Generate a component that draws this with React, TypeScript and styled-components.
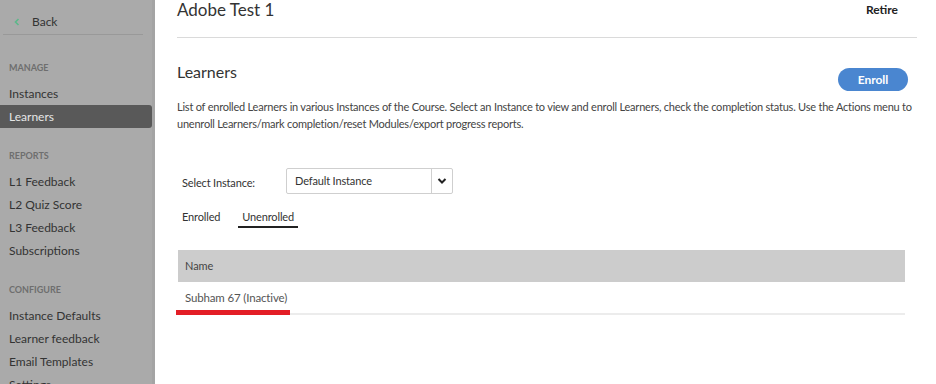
import styled, { createGlobalStyle } from "styled-components";

const GlobalStyle = createGlobalStyle`
  html, body {
    margin: 0;
    padding: 0;
    height: 384px;
    overflow: hidden;
    background: #fff;
  }
  body {
    font-family: Lato, "Open Sans", "Liberation Sans", sans-serif;
  }
  * { box-sizing: border-box; }
`;

const sections = [
  { title: "MANAGE", items: ["Instances", "Learners"] },
  {
    title: "REPORTS",
    items: ["L1 Feedback", "L2 Quiz Score", "L3 Feedback", "Subscriptions"],
  },
  {
    title: "CONFIGURE",
    items: ["Instance Defaults", "Learner feedback", "Email Templates", "Settings"],
  },
];

const App = () => {
  return (
    <Page>
      <GlobalStyle />
      <Sidebar>
        <BackRow>
          <svg width="10" height="10" viewBox="0 0 10 10">
            <path d="M6.5 2 L3.5 5 L6.5 8" stroke="#5cb88a" strokeWidth="1.6" fill="none" />
          </svg>
          <span>Back</span>
        </BackRow>
        {sections.map((s) => (
          <Section key={s.title}>
            <SectionTitle>{s.title}</SectionTitle>
            {s.items.map((item) => (
              <NavItem key={item} $active={item === "Learners"}>
                {item}
              </NavItem>
            ))}
          </Section>
        ))}
      </Sidebar>
      <Main>
        <Header>
          <CourseTitle>Adobe Test 1</CourseTitle>
          <RetireBtn>Retire</RetireBtn>
        </Header>
        <HeadingRow>
          <Heading>Learners</Heading>
          <EnrollBtn>Enroll</EnrollBtn>
        </HeadingRow>
        <Description>
          List of enrolled Learners in various Instances of the Course. Select an Instance to view and
          enroll Learners, check the completion status. Use the Actions menu to unenroll Learners/mark
          completion/reset Modules/export progress reports.
        </Description>
        <SelectRow>
          <SelectLabel>Select Instance:</SelectLabel>
          <SelectBox>
            <SelectValue>Default Instance</SelectValue>
            <SelectArrow>
              <svg width="10" height="8" viewBox="0 0 10 8">
                <path d="M1.5 2 L5 5.5 L8.5 2" stroke="#222" strokeWidth="2" fill="none" />
              </svg>
            </SelectArrow>
          </SelectBox>
        </SelectRow>
        <Tabs>
          <Tab>Enrolled</Tab>
          <Tab $active>Unenrolled</Tab>
        </Tabs>
        <Table>
          <HeadRow>Name</HeadRow>
          <BodyRow>
            Subham 67 (Inactive)
            <RedMark />
          </BodyRow>
        </Table>
      </Main>
    </Page>
  );
};
export default App;

const Page = styled.div`
  display: flex;
  height: 384px;
  overflow: hidden;
`;

const Sidebar = styled.aside`
  width: 155px;
  flex-shrink: 0;
  height: 384px;
  background: #aaaaaa;
  border-right: 3px solid #a4a4a4;
  overflow: hidden;
`;

const BackRow = styled.div`
  display: flex;
  align-items: center;
  gap: 10px;
  margin: 0 9px 5px 3px;
  padding: 10px 0 0 9px;
  height: 35px;
  border-bottom: 1px solid #999;
  font-size: 12px;
  color: #333;
  span {
    line-height: 16px;
  }
`;

const Section = styled.div`
  display: flex;
  flex-direction: column;
  padding-top: 21px;
`;

const SectionTitle = styled.div`
  font-size: 9px;
  font-weight: 700;
  color: #6e6e6e;
  padding-left: 9px;
  height: 14px;
  line-height: 14px;
  margin-bottom: 7px;
`;

const NavItem = styled.div<{ $active?: boolean }>`
  height: 23px;
  line-height: 23px;
  font-size: 12px;
  padding-left: 9px;
  color: ${(p) => (p.$active ? "#e6e6e6" : "#333")};
  background: ${(p) => (p.$active ? "#595959" : "transparent")};
  border-radius: 0 3px 3px 0;
`;

const Main = styled.main`
  flex: 1;
  padding: 0 16px 0 22px;
  font-family: Lato, "Open Sans", "Liberation Sans", sans-serif;
`;

const Header = styled.div`
  display: flex;
  justify-content: space-between;
  align-items: flex-start;
  height: 38px;
  border-bottom: 1px solid #dadada;
  margin-right: 3px;
`;

const CourseTitle = styled.h1`
  margin: 0;
  font-size: 17px;
  font-weight: 400;
  color: #333;
  line-height: 20px;
`;

const RetireBtn = styled.span`
  font-size: 12px;
  font-weight: 700;
  color: #222;
  margin: 3px 19px 0 0;
  line-height: 14px;
`;

const HeadingRow = styled.div`
  display: flex;
  justify-content: space-between;
  align-items: flex-start;
  padding-top: 24px;
`;

const Heading = styled.h2`
  margin: 0;
  font-size: 16px;
  font-weight: 400;
  color: #333;
  line-height: 20px;
`;

const EnrollBtn = styled.button`
  margin: 6px 12px 0 0;
  width: 70px;
  height: 23px;
  border: none;
  border-radius: 12px;
  background: #4a86d0;
  color: #fff;
  font-family: inherit;
  font-size: 12px;
  font-weight: 700;
`;

const Description = styled.p`
  margin: 7px 0 0;
  font-size: 11px;
  letter-spacing: -0.22px;
  line-height: 17px;
  color: #444;
`;

const SelectRow = styled.div`
  display: flex;
  align-items: center;
  margin-top: 36px;
  padding-left: 5px;
`;

const SelectLabel = styled.span`
  width: 104px;
  font-size: 11px;
  letter-spacing: -0.15px;
  color: #333;
  padding-top: 2px;
`;

const SelectBox = styled.div`
  display: flex;
  width: 167px;
  height: 26px;
  border: 1px solid #cfcfcf;
  border-radius: 2px;
`;

const SelectValue = styled.div`
  flex: 1;
  padding: 5px 0 0 8px;
  font-size: 11px;
  letter-spacing: -0.15px;
  color: #333;
`;

const SelectArrow = styled.div`
  width: 21px;
  border-left: 1px solid #cfcfcf;
  display: flex;
  align-items: center;
  justify-content: center;
`;

const Tabs = styled.div`
  display: flex;
  gap: 18px;
  margin-top: 16px;
  padding-left: 5px;
`;

const Tab = styled.span<{ $active?: boolean }>`
  font-size: 11px;
  letter-spacing: -0.15px;
  color: #333;
  padding: 0 4px 3px;
  margin-left: -4px;
  border-bottom: 2px solid ${(p) => (p.$active ? "#222" : "transparent")};
`;

const Table = styled.div`
  margin-top: 22px;
  margin-right: 15px;
  margin-left: 1px;
`;

const HeadRow = styled.div`
  height: 32px;
  line-height: 32px;
  padding-left: 7px;
  background: #cccccc;
  font-size: 11px;
  letter-spacing: -0.1px;
  color: #444;
`;

const BodyRow = styled.div`
  position: relative;
  height: 33px;
  line-height: 32px;
  padding-left: 7px;
  border-bottom: 2px solid #ececec;
  font-size: 11.5px;
  letter-spacing: -0.15px;
  color: #555;
`;

const RedMark = styled.div`
  position: absolute;
  left: -2px;
  bottom: -2px;
  width: 114px;
  height: 5px;
  background: #e31e26;
`;
